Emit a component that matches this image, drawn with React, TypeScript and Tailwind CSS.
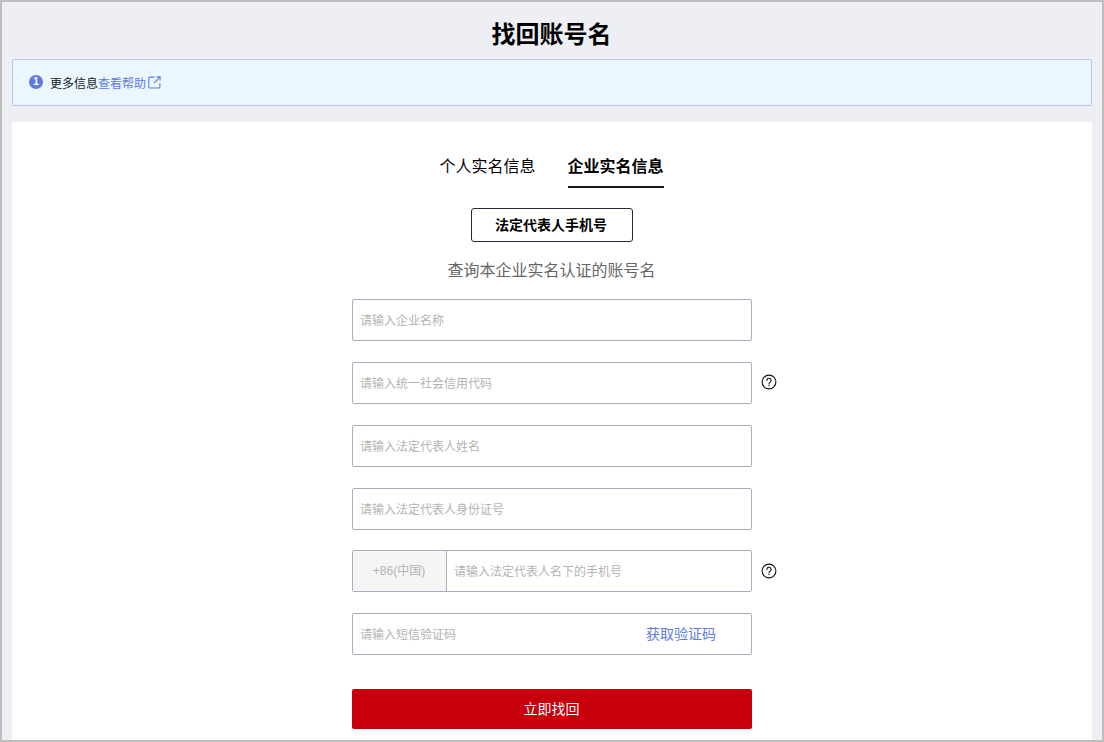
import React from "react";

const font = { fontFamily: '"Liberation Sans", "Noto Sans CJK SC", sans-serif' };

function Help({ className }: { className: string }) {
  return (
    <svg viewBox="0 0 16 16" className={`absolute h-[16px] w-[16px] ${className}`} fill="none" stroke="#111" strokeWidth="1.1">
      <circle cx="8" cy="8" r="6.9" />
      <path d="M5.9 6.4a2.1 2.1 0 1 1 3.3 1.7c-.8.5-1.2 1-1.2 1.8" strokeLinecap="round" />
      <circle cx="8" cy="11.6" r=".7" fill="#111" stroke="none" />
    </svg>
  );
}

function Field({ placeholder, help, className }: { placeholder: string; help?: boolean; className: string }) {
  return (
    <div className={`relative h-[42px] w-[400px] ${className}`}>
      <input
        placeholder={placeholder}
        className="h-full w-full rounded-[2px] border border-[#adadbd] bg-white pt-[2px] pr-[8px] pl-[7px] text-[12px] outline-none placeholder:text-[#b3b3b3]"
      />
      {help && <Help className="top-[12px] left-[409px]" />}
    </div>
  );
}

export default function App() {
  return (
    <div style={font} className="flex h-[742px] w-[1104px] flex-col overflow-hidden border-2 border-[#bdbdbd] bg-[#eeeff4] px-[10px]">
      <h1 className="pt-[16px] pr-[1px] text-center text-[24px] leading-[34px] font-bold text-black">找回账号名</h1>
      <div className="mt-[7px] flex h-[47px] shrink-0 items-center rounded-[2px] border border-[#b9c6f4] bg-[#ebf6ff] pl-[16px] text-[12px]">
        <span className="mb-[2px] flex h-[14px] w-[14px] items-center justify-center rounded-full bg-[#5e7ce0] text-[10px] leading-none font-bold text-white">1</span>
        <span className="mt-[2px] ml-[7px] text-[#191919]">更多信息</span>
        <span className="mt-[2px] text-[#5e7ce0]">查看帮助</span>
        <svg viewBox="0 0 12 12" className="ml-[2px] h-[13px] w-[13px]" fill="none" stroke="#5e7ce0" strokeWidth="1">
          <path d="M6 1H1.5a.8.8 0 0 0-.8.8v8.4a.8.8 0 0 0 .8.8h8.7a.8.8 0 0 0 .8-.8V6.5" />
          <path d="M5.5 6.5 11 1M7.8 .8H11.2V4.2" />
        </svg>
      </div>
      <main className="mt-[16px] flex flex-1 flex-col items-center bg-white">
        <div className="flex h-[66px] w-full justify-center gap-[32px] text-[16px]">
          <div className="-ml-[1px] h-[66px] pt-[33px] pr-[1px] leading-[24px] text-black">个人实名信息</div>
          <div className="-ml-[1px] h-[66px] border-b-2 border-[#191919] pt-[33px] leading-[24px] font-bold text-black">企业实名信息</div>
        </div>
        <button className="mt-[20px] h-[34px] w-[162px] rounded-[3px] border border-[#252b3a] bg-white pt-[1px] pr-[2px] text-[14px] font-bold text-black">法定代表人手机号</button>
        <p className="mt-[17px] -ml-[1px] text-[16px] leading-[24px] text-[#666]">查询本企业实名认证的账号名</p>
        <Field className="mt-[16px]" placeholder="请输入企业名称" />
        <Field className="mt-[21px]" placeholder="请输入统一社会信用代码" help />
        <Field className="mt-[21px]" placeholder="请输入法定代表人姓名" />
        <Field className="mt-[21px]" placeholder="请输入法定代表人身份证号" />
        <div className="relative mt-[20px] flex h-[42px] w-[400px] rounded-[2px] border border-[#adadbd]">
          <div className="flex w-[94px] items-center justify-center border-r border-[#adadbd] bg-[#f5f5f6] pr-[1px] text-[12px] text-[#b3b3b3]">+86(中国)</div>
          <input placeholder="请输入法定代表人名下的手机号" className="min-w-0 flex-1 pt-[1px] pr-[8px] pl-[7px] text-[12px] outline-none placeholder:text-[#b3b3b3]" />
          <Help className="top-[12px] left-[408px]" />
        </div>
        <div className="mt-[21px] flex h-[42px] w-[400px] items-center rounded-[2px] border border-[#adadbd]">
          <input placeholder="请输入短信验证码" className="min-w-0 flex-1 pt-[2px] pr-[8px] pl-[7px] text-[12px] outline-none placeholder:text-[#b3b3b3]" />
          <span className="mr-[35px] text-[14px] text-[#5e7ce0]">获取验证码</span>
        </div>
        <button className="mt-[34px] h-[40px] w-[400px] rounded-[2px] bg-[#c7000b] pr-[1px] text-[14px] text-white">立即找回</button>
      </main>
    </div>
  );
}
